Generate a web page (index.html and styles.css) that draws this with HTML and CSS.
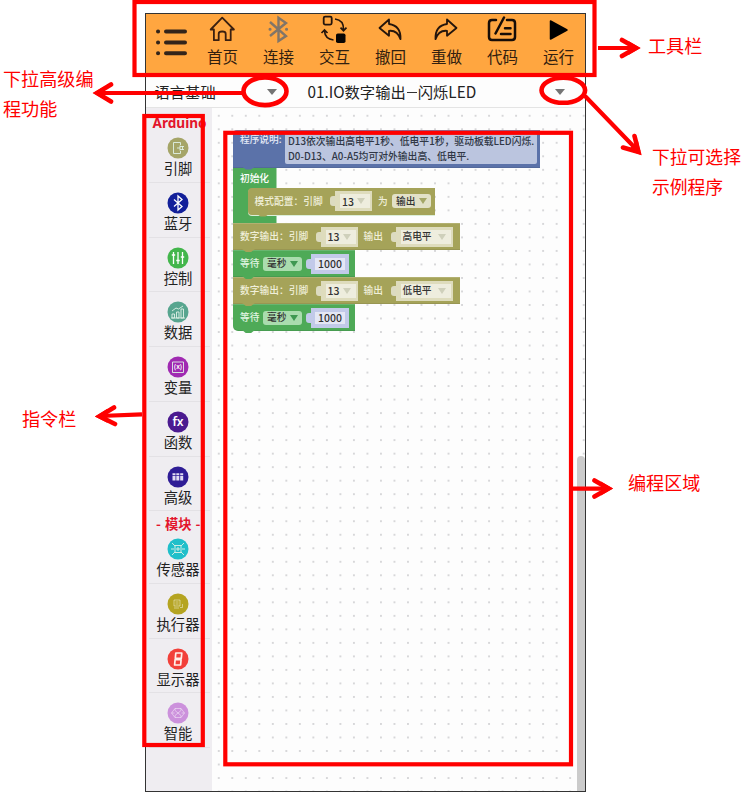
FILE: index.html
```html
<!DOCTYPE html>
<html lang="zh-CN">
<head>
<meta charset="utf-8">
<title>Arduino 编程</title>
<link rel="stylesheet" href="styles.css">
</head>
<body>
<main class="app">
  <nav class="toolbar">
    <div class="menu"><svg viewBox="0 0 48 60"><g stroke="#33241a" stroke-width="4" stroke-linecap="round"><path d="M20 17.500H39M20 28.500H39M20 39.300H39"/><path d="M12 17.500h.1M12 28.500h.1M12 39.300h.1"/></g></svg></div>
    <div class="tool"><svg viewBox="0 0 30 30"><path d="M15.200 3.700 3.700 15.500h3.200v10.700h4.800v-6.400q0-2.300 3.500-2.300t3.500 2.300v6.400h5V15.500h3.200z" fill="none" stroke="#3b2010" stroke-width="1.800" stroke-linejoin="round"/></svg><span>首页</span></div>
    <div class="tool"><svg viewBox="0 0 30 30"><path d="M7 8 23 22l-7.500 5V3.800L23 9 7 22" fill="none" stroke="#817568" stroke-width="2.400"/><path d="M7 15.300h.1M23.500 15.300h.1" stroke="#817568" stroke-width="3" stroke-linecap="round"/></svg><span>连接</span></div>
    <div class="tool"><svg viewBox="0 0 30 30"><rect x="4.700" y="2.600" width="8" height="8" rx="1.500" fill="none" stroke="#24150c" stroke-width="1.800"/><rect x="17" y="19.500" width="9.500" height="9.500" rx="1.800" fill="#080503"/><path d="M16 5q9 1 8.500 11M21.500 13.700l3 3 3-3M14.500 26Q6 25 5.500 17M2.500 19l3-3 3 3" fill="none" stroke="#24150c" stroke-width="1.700"/></svg><span>交互</span></div>
    <div class="tool"><svg viewBox="0 0 30 30"><path d="M14 5.500 4.500 14 14 21.700v-4.900q8.500-.8 11.500 8.400.5-13.600-11.500-15.200z" fill="none" stroke="#24150c" stroke-width="1.800" stroke-linejoin="round"/></svg><span>撤回</span></div>
    <div class="tool"><svg viewBox="0 0 30 30"><path d="m16 5.500 9.500 8.500-9.500 7.700v-4.900q-8.500-.8-11.500 8.400Q4 11.600 16 10z" fill="none" stroke="#24150c" stroke-width="1.800" stroke-linejoin="round"/></svg><span>重做</span></div>
    <div class="tool"><svg viewBox="0 0 30 30"><path d="M9 6H5Q2 6 2 9v14q0 3 3 3h20q3 0 3-3V9q0-3-3-3h-5M17 3.500 8.500 19.500M18 14.300h5.500M14 20h9.500" fill="none" stroke="#170d07" stroke-width="2.500" stroke-linecap="round"/></svg><span>代码</span></div>
    <div class="tool"><svg viewBox="0 0 30 30"><path d="M7.500 7v18L24 16z" fill="#000" stroke="#000" stroke-width="1.500" stroke-linejoin="round"/></svg><span>运行</span></div>
  </nav>
  <div class="selectors">
    <div class="select select-lang"><span>语言基础</span><i class="caret"></i></div>
    <div class="select select-example"><span>01.IO数字输出<i class="dash"></i>闪烁LED</span><i class="caret"></i></div>
  </div>
  <div class="body">
    <aside class="side">
      <h2 class="arduino">Arduino</h2>
      <div class="item"><svg viewBox="0 0 22 22"><circle cx="11" cy="11" r="10.500" fill="#a5a568"/><path d="M13.500 8V5.500h-7v11h7V14M10 11h3M13 8.500v5M15.500 9v4M13 9.500h4M13 12.500h4" class="line"/></svg><span>引脚</span></div>
      <div class="item"><svg viewBox="0 0 22 22"><circle cx="11" cy="11" r="10.500" fill="#13209a"/><path d="m7 7.500 8 7-4 3.500V4l4 3.500-8 7" class="line bright"/></svg><span>蓝牙</span></div>
      <div class="item"><svg viewBox="0 0 22 22"><circle cx="11" cy="11" r="10.500" fill="#43b64c"/><path d="M6.500 5v12M11 5v12M15.500 5v12M4.800 8h3.400M9.300 13.500h3.400M13.800 10h3.400" class="line bright"/></svg><span>控制</span></div>
      <div class="item"><svg viewBox="0 0 22 22"><circle cx="11" cy="11" r="10.500" fill="#57a58f"/><path d="M5 17v-4h2.500v4zM9.500 17v-6H12v6zM14 17V8h2.500v9zM5 10l4-3 2.500 1L16 5M4 17h14" class="line"/></svg><span>数据</span></div>
      <div class="item"><svg viewBox="0 0 22 22"><circle cx="11" cy="11" r="10.500" fill="#a02ab2"/><path d="M5.500 6h11v10.500h-11z" class="line"/><text x="11" y="13.300" class="glyph tiny">(x)</text></svg><span>变量</span></div>
      <div class="item"><svg viewBox="0 0 22 22"><circle cx="11" cy="11" r="10.500" fill="#4b1a90"/><text x="11" y="15" class="glyph">fx</text></svg><span>函数</span></div>
      <div class="item"><svg viewBox="0 0 22 22"><circle cx="11" cy="11" r="10.500" fill="#2f1d96"/><path d="M5.500 7.300h3v2h-3zM9.300 7.300h3v2h-3zM13.200 7.300h3v2h-3zM5.500 10.100h3v4.500h-3zM9.300 10.100h3v4.500h-3zM13.200 10.100h3v4.500h-3z" fill="#e2ddf3"/></svg><span>高级</span></div>
      <h2 class="modules">- 模块 -</h2>
      <div class="item"><svg viewBox="0 0 22 22"><circle cx="11" cy="11" r="10.500" fill="#20bfca"/><path d="M8 7.500h6v7H8zM10 10h2v2h-2zM4 11h3M15 11h3M5 5l3 3M14 14l3 3M17 5l-3 3M8 14l-3 3" class="line"/></svg><span>传感器</span></div>
      <div class="item"><svg viewBox="0 0 22 22"><circle cx="11" cy="11" r="10.500" fill="#b5a421"/><path d="M7 7h6v6H7zM8.500 9h3M8.500 11h3M7 15h5M13 14.500h2.500V11" class="line faint"/></svg><span>执行器</span></div>
      <div class="item"><svg viewBox="0 0 22 22"><circle cx="11" cy="11" r="10.500" fill="#f2403a"/><path d="M8.800 5h6l-.5 5.300H8.300zM8.100 11.700h6l-.5 5.300H7.600z" fill="none" stroke="#fff0ea" stroke-width="1.700" stroke-linejoin="round"/></svg><span>显示器</span></div>
      <div class="item"><svg viewBox="0 0 22 22"><circle cx="11" cy="11" r="10.500" fill="#cc91dc"/><path d="m8 6.500h6l3.500 4.500-3.500 4.500H8L4.500 11zM8 8.500l6 5M14 8.500l-6 5M8 6.500v2M14 6.500v2M8 15.500v-2M14 15.500v-2M4.500 11h3M14.500 11h3" class="line faint"/></svg><span>智能</span></div>
    </aside>
    <section class="workspace">
      <div class="stack">
        <div class="block note"><span class="word">程序说明:</span><p>D13依次输出高电平1秒、低电平1秒，驱动板载LED闪烁.<br>D0-D13、A0-A5均可对外输出高、低电平.</p></div>
        <div class="setup">
          <div class="setup-title">初始化</div>
          <div class="block mode"><span class="word w-pin">模式配置：引脚</span><i class="plug"></i><b class="value"><em>13</em><i class="tri"></i></b><span class="word w-as">为</span><b class="drop"><em>输出</em><i class="tri"></i></b></div>
        </div>
        <div class="block write"><span class="word w-pin">数字输出：引脚</span><i class="plug"></i><b class="value"><em>13</em><i class="tri"></i></b><span class="word w-out">输出</span><i class="plug"></i><b class="value wide"><em>高电平</em><i class="tri"></i></b></div>
        <div class="block wait"><span class="word w-wait">等待</span><b class="drop"><em>毫秒</em><i class="tri"></i></b><i class="plug"></i><b class="number"><em>1000</em></b></div>
        <div class="block write"><span class="word w-pin">数字输出：引脚</span><i class="plug"></i><b class="value"><em>13</em><i class="tri"></i></b><span class="word w-out">输出</span><i class="plug"></i><b class="value wide"><em>低电平</em><i class="tri"></i></b></div>
        <div class="block wait last"><span class="word w-wait">等待</span><b class="drop"><em>毫秒</em><i class="tri"></i></b><i class="plug"></i><b class="number"><em>1000</em></b></div>
      </div>
      <div class="scrollbar"></div>
    </section>
  </div>
</main>
<svg class="marks" viewBox="0 0 741 801">
  <rect x="134.500" y="2" width="460" height="73"/>
  <rect x="144.300" y="116" width="58.500" height="629"/>
  <rect x="225.300" y="132.800" width="345.700" height="631.500"/>
  <ellipse cx="265" cy="91.300" rx="21.500" ry="13.800"/>
  <ellipse cx="563.300" cy="90.300" rx="21.800" ry="12.500"/>
  <path d="M242 93H98M598 48h37M585 96l54 56M142 414.300l-42 1.700M573 488.600h34"/>
  <path class="head" d="M111 84.500 97 93l14 8.500M622 40l14 8-14 8M634.500 136l4 16-15.500-4.500M114 407.500 99.500 416.200 115 424M594.500 480.500l14 8-14 8"/>
  <path class="tip" d="m93 93 12-7v14zM640.500 48l-12-7v14zM641 155l-3-14-10 9zM95 416.400l12-7.400.6 14zM613 488.500l-12-7v14z"/>
</svg>
<p class="label label-left">下拉高级编<br>程功能</p>
<p class="label label-commands">指令栏</p>
<p class="label label-tools">工具栏</p>
<p class="label label-right">下拉可选择<br>示例程序</p>
<p class="label label-area">编程区域</p>
</body>
</html>
```
FILE: styles.css
```css
* { box-sizing: border-box; }
body {
  position: relative;
  width: 741px;
  height: 801px;
  margin: 0;
  padding: 12.500px 0 0 144.500px;
  overflow: hidden;
  background: #fff;
  font-family: "Noto Sans CJK SC", "Noto Sans", sans-serif;
}
p, h2 { margin: 0; }
em { font-style: normal; }

.app {
  display: flex;
  flex-direction: column;
  width: 441.500px;
  height: 779px;
  overflow: hidden;
  border: 1.500px solid #333;
  background: #fdfdfd;
}

.toolbar {
  display: grid;
  flex: none;
  grid-template-columns: 48.500px repeat(7, 56px);
  height: 63px;
  background: #ffa640;
}
.menu svg { display: block; width: 48px; height: 60px; }
.tool { text-align: center; color: #32200f; font-size: 15.500px; line-height: 24px; }
.tool svg { display: block; width: 30px; height: 30px; margin: 0 auto; }
.tool span { display: block; padding-left: 1px; }

.selectors {
  display: flex;
  flex: none;
  height: 31.500px;
  border-bottom: 1px solid #e4e4e4;
  color: #222;
  font-size: 15.300px;
  line-height: 31px;
}
.select { display: flex; align-items: center; justify-content: space-between; white-space: nowrap; }
.select-lang { width: 131px; padding-left: 9px; }
.select-example { width: 288px; padding-left: 31px; }
.dash { display: inline-block; width: 10px; height: 1.500px; margin: 0 1px; background: #333; vertical-align: 5px; }
.caret { border: 5.500px solid transparent; border-top: 6px solid #747474; border-bottom: 0; }

.body { display: flex; flex: 1; min-height: 0; }
.side { flex: none; width: 66.500px; background: #efedf1; color: #222; }
.side h2 { white-space: nowrap; color: #e3152b; font-weight: 700; }
.side .arduino { width: 58px; height: 20px; padding-left: 7px; font-family: "Noto Sans", sans-serif; font-size: 13.600px; line-height: 30px; }
.side .modules { height: 17.800px; font-size: 13.300px; line-height: 26px; text-align: center; padding-right: 1px; word-spacing: 1px; }
.item {
  width: 61px;
  height: 54.750px;
  margin-left: 3.500px;
  padding: 9px 3px 0 0;
  border-bottom: 1px solid #e3e1e5;
  font-size: 14.300px;
  line-height: 18px;
  text-align: center;
}
.item svg { display: block; width: 22px; height: 22px; margin: 0 auto; }
.item span { display: block; }
.line { fill: none; stroke: #e0f0e6; stroke-width: .9; }
.line.bright { stroke: #fff; stroke-width: 1.300; }
.line.faint { stroke: #fff; stroke-opacity: .5; }
.glyph { fill: #fff; font: 600 12px "Noto Sans", sans-serif; text-anchor: middle; }
.glyph.tiny { font-size: 6.500px; }

.workspace {
  position: relative;
  flex: 1;
  background: radial-gradient(circle, #d7d7d9 0 .8px, transparent 1.300px) 0 1px / 13.520px 13.520px;
}
.scrollbar {
  position: absolute;
  top: 348px;
  right: 0;
  bottom: 0;
  width: 8.500px;
  border-radius: 5px 5px 0 0;
  background: #cbcbcb;
}

.stack { padding: 22px 0 0 21px; }
.block {
  position: relative;
  display: flex;
  align-items: center;
  height: 27px;
  padding-left: 7px;
  box-shadow: inset 0 1px rgba(255, 255, 255, .15), inset 0 -1px rgba(0, 0, 0, .08);
  color: #fff;
  font-size: 9.700px;
  font-weight: 500;
  line-height: 13px;
  white-space: nowrap;
}
.block::after {
  content: "";
  position: absolute;
  bottom: -2px;
  left: 9px;
  z-index: 1;
  width: 13px;
  height: 3px;
  background: inherit;
  clip-path: polygon(0 0, 100% 0, 70% 100%, 30% 100%);
}
.word { color: #f0efd9; }
.note { align-items: flex-start; width: 307px; height: 37.500px; border-radius: 4px 0 0; background: #5b72a9; }
.note .word { width: 44.500px; padding-top: 3px; color: #e6ebf7; }
.note p {
  width: 252px;
  height: 31px;
  margin-top: 3px;
  padding: 1px 0 0 3.500px;
  border-radius: 2px;
  background: #bbc5df;
  color: #303746;
  font-size: 9.800px;
  line-height: 14.500px;
}
.setup { height: 55.500px; background: linear-gradient(#4eaa57, #4eaa57) 0 0 / 43.500px 100% no-repeat; }
.setup-title { height: 20px; padding-left: 7px; color: #fff; font-size: 9.700px; font-weight: 500; line-height: 20px; }
.mode { width: 187.500px; margin-left: 14.500px; border-radius: 4px 0 0 4px; background: #a5a359; box-shadow: 0 1px #dcefd9; }
.write { width: 226.500px; background: #a5a359; }
.wait { width: 121.500px; background: #4eaa57; }
.wait .word { color: #e2f6e3; }
.last { border-radius: 0 0 0 5px; }
.w-pin { width: 75.500px; letter-spacing: .05px; }
.w-out { width: 33px; padding-left: 6px; }
.w-as { width: 20px; padding-left: 6px; }
.w-wait { width: 23px; }
.plug { width: 5px; height: 10px; border-radius: 3px 0 0 3px; background: #dcdbc0; }
.wait .plug { margin-left: 4px; background: #c2cae9; }
.value, .number, .drop { display: flex; align-items: center; color: #333; font-weight: 500; }
.value {
  justify-content: space-between;
  width: 37px;
  height: 20px;
  padding: 0 5px 0 2px;
  border: 3px solid #dedcbd;
  border-width: 3px 2px 3px 5px;
  background: #eeedde;
  font-size: 10.500px;
}
.value.wide { width: 57px; font-size: 9.700px; }
.tri { border: 4px solid transparent; border-top: 6px solid #cfd0bb; border-bottom: 0; }
.drop { justify-content: space-between; width: 39px; height: 14px; padding: 0 4px; border-radius: 3px; background: #e2e1c8; }
.mode .drop .tri { border-top-color: #a5a768; }
.wait .drop { background: #aadcae; }
.wait .drop .tri { border-top-color: #3f9851; }
.number { justify-content: center; width: 38px; height: 20px; border: 4px solid #c2cae9; background: #e4e7f5; font-size: 10.500px; }

.marks { position: absolute; top: 0; left: 0; width: 741px; height: 801px; fill: none; stroke: #f00; stroke-width: 4.200; }
.marks ellipse { stroke-width: 4.600; }
.marks .head { stroke-width: 4.600; stroke-linecap: round; }
.marks .tip { fill: #f00; stroke: none; }
.label { position: absolute; color: #f00; font-size: 18.100px; line-height: 30px; white-space: nowrap; }
.label-left { top: 63px; left: 3px; }
.label-commands { top: 403px; left: 22px; }
.label-tools { top: 30px; left: 648px; }
.label-right { top: 141px; left: 652px; font-size: 17.800px; }
.label-area { top: 467px; left: 628px; }
```
